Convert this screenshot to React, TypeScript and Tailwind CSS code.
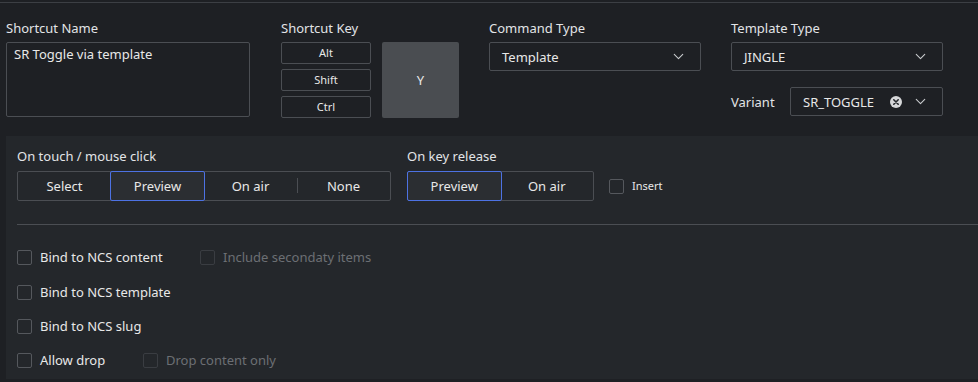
import { ChevronDown } from "lucide-react";

const Select = ({ value, w, clear }: { value: string; w: string; clear?: boolean }) => (
  <div className={`${w} h-[29px] border border-[#4b4e53] rounded-[2px] flex items-center pl-[12px] pr-[13px]`}>
    <span className="flex-1 text-[#e8e8e8]">{value}</span>
    {clear && (
      <svg width="12" height="12" viewBox="0 0 12 12" className="mr-[10px]">
        <circle cx="6" cy="6" r="6" fill="#d6d7d9" />
        <path d="M3.8 3.8 L8.2 8.2 M8.2 3.8 L3.8 8.2" stroke="#24272b" strokeWidth="1.6" strokeLinecap="round" />
      </svg>
    )}
    <ChevronDown size={17} strokeWidth={1.5} className="text-[#c9cbce]" />
  </div>
);

const Segmented = ({ items, active, w }: { items: string[]; active: number; w: string }) => (
  <div className={`${w} h-[30px] border border-[#4b4e53] rounded-[2px] flex`}>
    {items.map((item, i) => (
      <div key={item} className="relative flex-1 flex items-center justify-center text-[#e8e8e8]">
        {i === active && <div className="absolute -inset-px border border-[#4d72e3] rounded-[2px] bg-[#2b2e32]" />}
        {i > 0 && i !== active && i - 1 !== active && (
          <div className="absolute left-0 top-[6px] h-[15px] w-px bg-[#4b4e53]" />
        )}
        <span className="relative -mt-px">{item}</span>
      </div>
    ))}
  </div>
);

const Check = ({ label, disabled, w }: { label: string; disabled?: boolean; w?: string }) => (
  <div className={`flex items-center gap-[8px] ${w ?? ""}`}>
    <div
      className={`w-[15px] h-[15px] rounded-[2px] border ${disabled ? "border-[#3a3d42]" : "border-[#55585d]"}`}
    />
    <span className={disabled ? "text-[#6c6f74]" : "text-[#e8e8e8]"}>{label}</span>
  </div>
);

const KeyBtn = ({ label }: { label: string }) => (
  <div className="w-[90px] h-[22px] border border-[#4b4e53] rounded-[2px] flex items-center justify-center text-[11px] text-[#e8e8e8]">
    {label}
  </div>
);

export default function App() {
  return (
    <div
      className="w-[978px] h-[382px] bg-[#1e2024] text-[13px] leading-[18px] text-[#e2e4e7] overflow-hidden"
      style={{ fontFamily: '"Noto Sans", "Open Sans", sans-serif' }}
    >
      <div className="h-[2px]" />
      <div className="border-t border-[#3c3f44]" />

      {/* top form */}
      <div className="flex pl-[6px] pt-[16px]">
        <div className="w-[244px]">
          <div>Shortcut Name</div>
          <div className="mt-[5px] h-[75px] border border-[#4b4e53] rounded-[2px] px-[7px] pt-[2px] text-[#e8e8e8]">
            SR Toggle via template
          </div>
        </div>

        <div className="ml-[31px]">
          <div>Shortcut Key</div>
          <div className="mt-[5px] flex gap-[11px]">
            <div className="flex flex-col gap-[5px]">
              <KeyBtn label="Alt" />
              <KeyBtn label="Shift" />
              <KeyBtn label="Ctrl" />
            </div>
            <div className="w-[77px] h-[76px] bg-[#4a4d51] rounded-[2px] flex items-center justify-center text-[#e8e8e8]">
              Y
            </div>
          </div>
        </div>

        <div className="ml-[30px]">
          <div>Command Type</div>
          <div className="mt-[5px]">
            <Select value="Template" w="w-[212px]" />
          </div>
        </div>

        <div className="ml-[30px]">
          <div>Template Type</div>
          <div className="mt-[5px]">
            <Select value="JINGLE" w="w-[212px]" />
          </div>
          <div className="mt-[16px] flex items-center">
            <span className="w-[59px]">Variant</span>
            <Select value="SR_TOGGLE" w="w-[153px]" clear />
          </div>
        </div>
      </div>

      {/* lower panel */}
      <div className="mt-[18px] ml-[6px] h-[243px] bg-[#24272b] pl-[11px] pt-[11px]">
        <div className="flex">
          <div>
            <div>On touch / mouse click</div>
            <div className="mt-[6px]">
              <Segmented items={["Select", "Preview", "On air", "None"]} active={1} w="w-[374px]" />
            </div>
          </div>
          <div className="ml-[16px]">
            <div>On key release</div>
            <div className="mt-[6px] flex items-center">
              <Segmented items={["Preview", "On air"]} active={0} w="w-[187px]" />
              <div className="ml-[15px] flex items-center gap-[8px]">
                <div className="w-[15px] h-[15px] rounded-[2px] border border-[#55585d]" />
                <span className="text-[11px] text-[#e8e8e8]">Insert</span>
              </div>
            </div>
          </div>
        </div>

        <div className="mt-[23px] border-t border-[#4b4e53]" />

        <div className="mt-[23px] flex flex-col">
          <div className="flex">
            <Check label="Bind to NCS content" w="w-[183px]" />
            <Check label="Include secondaty items" disabled />
          </div>
          <div className="mt-[17px]">
            <Check label="Bind to NCS template" />
          </div>
          <div className="mt-[16px]">
            <Check label="Bind to NCS slug" />
          </div>
          <div className="mt-[16px] flex">
            <Check label="Allow drop" w="w-[126px]" />
            <Check label="Drop content only" disabled />
          </div>
        </div>
      </div>
    </div>
  );
}
